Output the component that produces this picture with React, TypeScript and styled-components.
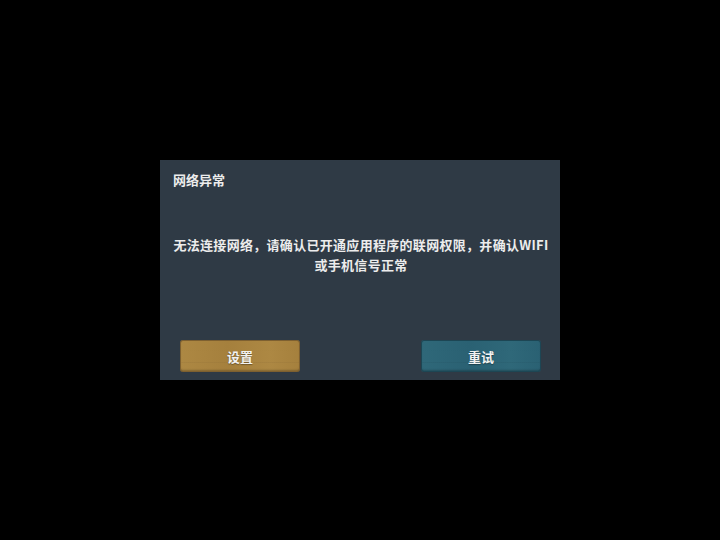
import React from "react";
import styled, { createGlobalStyle } from "styled-components";

const GlobalStyle = createGlobalStyle`
  html, body {
    margin: 0;
    padding: 0;
    background: #000;
  }
  body {
    font-family: "Noto Sans CJK SC", "Noto Sans", sans-serif;
  }
`;

type Tone = "gold" | "teal";

const tones: Record<Tone, { base: string; light: string; dark: string }> = {
  gold: { base: "#a5803d", light: "#ad8843", dark: "#7e6030" },
  teal: { base: "#2a6173", light: "#2f6879", dark: "#1d4654" },
};

const Screen = styled.div`
  width: 720px;
  height: 540px;
  display: flex;
  align-items: center;
  justify-content: center;
  background: #000;
`;

const Dialog = styled.div`
  width: 400px;
  height: 220px;
  box-sizing: border-box;
  padding: 10px 19px 8px 20px;
  background: #2f3a45;
  display: flex;
  flex-direction: column;
  color: #ececec;
`;

const Title = styled.div`
  font-size: 13px;
  font-weight: 700;
  line-height: 20px;
  margin-left: -7px;
`;

const Message = styled.div`
  margin: 45px -10px 0 -9px;
  font-size: 13px;
  font-weight: 700;
  line-height: 20px;
  text-align: center;
  letter-spacing: 0.3px;
`;

const Actions = styled.div`
  margin-top: auto;
  display: flex;
  justify-content: space-between;
`;

const Button = styled.button<{ $tone: Tone }>`
  width: 120px;
  height: 32px;
  border: none;
  border-radius: 3px;
  padding: 0;
  font-family: "Noto Sans CJK SC", "Noto Sans", sans-serif;
  font-size: 13px;
  font-weight: 700;
  color: #f2f2f2;
  text-shadow: 0 1px 1px rgba(0, 0, 0, 0.35);
  background:
    linear-gradient(
      180deg,
      transparent 30%,
      ${(p) => tones[p.$tone].dark}33 31%,
      transparent 33%,
      transparent 68%,
      ${(p) => tones[p.$tone].dark}2a 70%,
      transparent 72%
    ),
    linear-gradient(
      90deg,
      ${(p) => tones[p.$tone].light},
      ${(p) => tones[p.$tone].base} 40%,
      ${(p) => tones[p.$tone].light} 75%,
      ${(p) => tones[p.$tone].base}
    );
  box-shadow:
    inset 0 0 0 1px ${(p) => tones[p.$tone].dark},
    inset 0 -2px 2px rgba(0, 0, 0, 0.25);
  cursor: pointer;
`;

export default function App() {
  return (
    <>
      <GlobalStyle />
      <Screen>
        <Dialog>
          <Title>网络异常</Title>
          <Message>
            无法连接网络，请确认已开通应用程序的联网权限，并确认WIFI
            <br />
            或手机信号正常
          </Message>
          <Actions>
            <Button $tone="gold">设置</Button>
            <Button $tone="teal">重试</Button>
          </Actions>
        </Dialog>
      </Screen>
    </>
  );
}
